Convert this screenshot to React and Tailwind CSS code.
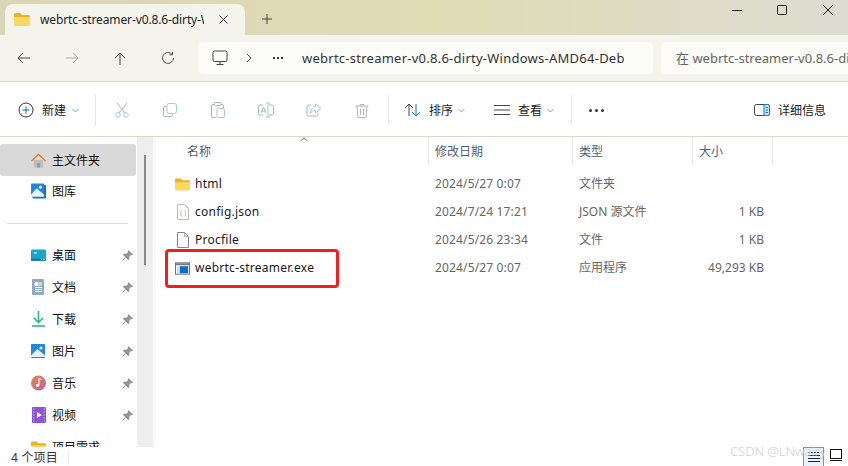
import React from "react";

const Stroke = ({ w = 16, h = 16, c = "#444", sw = 1, children, vb }) => (
  <svg width={w} height={h} viewBox={vb || `0 0 ${w} ${h}`} fill="none" stroke={c} strokeWidth={sw}>{children}</svg>
);

const Folder = ({ w = 16, h = 13 }) => (
  <svg width={w} height={h} viewBox="0 0 16 13">
    <path d="M0 1.5A1.5 1.5 0 0 1 1.5 0H6l2 2h6.5A1.5 1.5 0 0 1 16 3.5V5H0z" fill="#f0b020" />
    <path d="M0 4h16v7.5a1.5 1.5 0 0 1-1.500 1.500h-13A1.500 1.500 0 0 1 0 11.500z" fill="#fbd764" />
  </svg>
);

const Chevron = () => (
  <svg width="7" height="5" viewBox="0 0 7 5" fill="none" stroke="#999" strokeWidth="1"><path d="M.5 1 3.500 4 6.500 1" /></svg>
);

const Sep = () => <div className="w-px h-[32px] bg-[#e6e6e6]" />;

const Cell = ({ w, children }) => <div className={`flex justify-center items-center ${w}`}>{children}</div>;

function NavBar() {
  return (
    <div className="h-[47px] bg-[#f4f4ec] flex items-center border-b border-[#d9d9c9]">
      <div className="w-[198px] flex items-center shrink-0">
        <Cell w="w-[48px]"><Stroke w={14} h={12} c="#444"><path d="M13 6H1M6 1 1 6l5 5" /></Stroke></Cell>
        <Cell w="w-[48px]"><Stroke w={14} h={12} c="#aaa"><path d="M1 6h12M8 1l5 5-5 5" /></Stroke></Cell>
        <Cell w="w-[48px]"><Stroke w={12} h={13} c="#444"><path d="M6 13V1M1 6l5-5 5 5" /></Stroke></Cell>
        <Cell w="w-[48px]"><Stroke w={14} h={14} c="#555"><path d="M11 3.200A5.500 5.500 0 1 0 12.500 7" /><path d="M11.500.8v3h-3" /></Stroke></Cell>
      </div>
      <div className="w-[455px] h-[32px] bg-[#fbfbf8] rounded-[5px] flex items-center shrink-0">
        <div className="w-[14px]" />
        <Stroke w={16} h={16} c="#444"><rect x="1" y="1" width="14" height="10.500" rx="1.500" /><path d="M8 11.500v2.500M4.500 14.500h7" /></Stroke>
        <div className="w-[18px]" />
        <Stroke w={6} h={10} c="#444"><path d="m1 1 4 4-4 4" /></Stroke>
        <div className="w-[21px]" />
        <div className="flex gap-[2px] w-[13px]">
          <span className="w-[2px] h-[2px] bg-[#333]" />
          <span className="w-[2px] h-[2px] bg-[#333]" />
          <span className="w-[2px] h-[2px] bg-[#333]" />
        </div>
        <div className="w-[16px]" />
        <div className="w-[322px] overflow-hidden whitespace-nowrap text-[#333] text-[13px] tracking-[0.25px] pt-[2px]">webrtc-streamer-v0.8.6-dirty-Windows-AMD64-Debug</div>
      </div>
      <div className="w-[8px] shrink-0" />
      <div className="flex-1 h-[32px] bg-[#fbfbf8] rounded-l-[5px] flex items-center pl-[15px] pt-[2px] overflow-hidden whitespace-nowrap text-[13px] text-[#666]">在 webrtc-streamer-v0.8.6-dirty-Windows</div>
    </div>
  );
}

function CommandBar() {
  const dim = "#a9b4bd";
  const blue = "#9cc9ec";
  return (
    <div className="h-[55px] bg-white flex items-center pt-[2px] text-[12px] text-[#222] border-b border-[#d9d9c9]">
      <div className="w-[95px] flex items-center shrink-0">
        <div className="w-[18px]" />
        <Stroke w={16} h={16} c="#333"><circle cx="8" cy="8" r="7" /><path d="M8 4.500v7M4.500 8h7" stroke="#0a6cc4" /></Stroke>
        <div className="w-[8px]" />
        <span className="w-[25px] pt-[1px]">新建</span>
        <div className="w-[5px]" />
        <Chevron />
      </div>
      <Sep />
      <div className="flex shrink-0 w-[292px] pl-[2px]">
        <Cell w="w-[48px]"><Stroke w={14} h={16} c={dim}><path d="M2 1l8 10M12 1 4 11" /><circle cx="3" cy="13" r="2.300" stroke={blue} /><circle cx="11" cy="13" r="2.300" stroke={blue} /></Stroke></Cell>
        <Cell w="w-[48px]"><Stroke w={14} h={14} c={dim}><path d="M3 3.500H2A1.500 1.500 0 0 0 .5 5v7A1.500 1.500 0 0 0 2 13.500h6A1.500 1.500 0 0 0 9.500 12v-.5" /><rect x="4" y=".5" width="9.500" height="10" rx="2" stroke={blue} /></Stroke></Cell>
        <Cell w="w-[48px]"><Stroke w={14} h={16} c={dim}><path d="M3.500 2.500H2A1.500 1.500 0 0 0 .5 4v10A1.500 1.500 0 0 0 2 15.500h3M10 2.500h1A1.500 1.500 0 0 1 12.500 4v2" /><rect x="3.500" y=".5" width="6.500" height="3" rx="1" /><rect x="6" y="6.500" width="7.500" height="9" rx="1.500" stroke={blue} /></Stroke></Cell>
        <Cell w="w-[48px]"><Stroke w={16} h={16} c={dim}><path d="M5 3H2A1.500 1.500 0 0 0 .5 4.500v7A1.500 1.500 0 0 0 2 13h3M11 3h3a1.500 1.500 0 0 1 1.500 1.500v7A1.500 1.500 0 0 1 14 13h-3" /><path d="M10 1v14M8 1h4M8 15h4" stroke={blue} /><path d="m3 11 2.500-6L8 11M3.800 9h3.500" /></Stroke></Cell>
        <Cell w="w-[48px]"><Stroke w={16} h={14} c={dim}><path d="M5 2H2.500A1.500 1.500 0 0 0 1 3.500v8A1.500 1.500 0 0 0 2.500 13h8a1.500 1.500 0 0 0 1.500-1.500V10" /><path d="M9.500 1 15 5.500 9.500 10V7.500C7 7.500 5.500 8.500 4.500 10.500 4.500 6.500 6.500 4 9.500 3.500z" stroke={blue} /></Stroke></Cell>
        <Cell w="w-[48px]"><Stroke w={14} h={15} c={dim}><path d="M.5 3h13M5 3V1.500h4V3M2 3l.8 10.500a1 1 0 0 0 1 1h6.400a1 1 0 0 0 1-1L12 3M5.500 6v6M8.500 6v6" /></Stroke></Cell>
      </div>
      <Sep />
      <div className="w-[182px] flex items-center shrink-0">
        <div className="w-[15px]" />
        <Stroke w={17} h={14} c="#444"><path d="M5 13V1M1 5l4-4 4 4" /><path d="M12 1v12M8 9l4 4 4-4" stroke="#0a78d4" /></Stroke>
        <div className="w-[8px]" />
        <span className="w-[24px] pt-[1px]">排序</span>
        <div className="w-[5px]" />
        <Chevron />
        <div className="w-[29px]" />
        <Stroke w={16} h={10} c="#444"><path d="M0 .5h16M0 5h16M0 9.500h16" /></Stroke>
        <div className="w-[8px]" />
        <span className="w-[24px] pt-[1px]">查看</span>
        <div className="w-[5px]" />
        <Chevron />
      </div>
      <Sep />
      <div className="w-[182px] pl-[17px] flex gap-[3px] shrink-0">
        <span className="w-[3px] h-[3px] rounded-full bg-[#333]" />
        <span className="w-[3px] h-[3px] rounded-full bg-[#333]" />
        <span className="w-[3px] h-[3px] rounded-full bg-[#333]" />
      </div>
      <svg width="16" height="12" viewBox="0 0 16 12" fill="none"><rect x=".5" y=".5" width="15" height="11" rx="2" stroke="#444" /><path d="M10 .5h3.500a2 2 0 0 1 2 2v7a2 2 0 0 1-2 2H10z" fill="#cfe6f8" stroke="#0a78d4" /><path d="M11.500 3.500h2.500M11.500 6h2.500M11.500 8.500h2.500" stroke="#0a78d4" /></svg>
      <div className="w-[8px]" />
      <span className="pt-[1px]">详细信息</span>
    </div>
  );
}

const Home = () => (
  <svg width="16" height="15" viewBox="0 0 16 15">
    <path d="M3 7h10v7a1 1 0 0 1-1 1H4a1 1 0 0 1-1-1z" fill="#bdbdbd" />
    <path d="M6.500 10h3v5h-3z" fill="#999" />
    <path d="M8 0 16 7.500 15 8.500 8 2 1 8.500 0 7.500z" fill="#e0791b" />
  </svg>
);
const Gallery = () => (
  <svg width="16" height="16" viewBox="0 0 16 16">
    <rect x="1.500" y="1.500" width="14.500" height="14.500" rx="1" fill="#1f6db5" />
    <rect width="14" height="14" rx="1" fill="#1d8ae0" />
    <circle cx="10" cy="4" r="1.500" fill="#fff" />
    <path d="M0 14 V12 L6 5 14 12 v2z" fill="#e8f3fb" />
  </svg>
);
const Desktop = () => (
  <svg width="16" height="12" viewBox="0 0 16 12">
    <rect width="16" height="12" rx="1" fill="#17a6c8" />
    <rect x="0" y="10" width="16" height="2" fill="#0c6f97" />
    <rect x="3" y="3" width="3" height="1.500" fill="#c5f0f5" />
    <path d="M11 10.500h1M13 10.500h2" stroke="#fff" strokeWidth="1" />
  </svg>
);
const Docs = () => (
  <svg width="13" height="16" viewBox="0 0 13 16">
    <rect width="12" height="16" rx="1" fill="#8fa8c4" />
    <path d="M3 3.500h3v3H3z M7 4h3M7 6h3M3 8.500h7M3 10.500h7M3 12.500h7" stroke="#fff" strokeWidth="1" fill="#fff" />
  </svg>
);
const Download = () => (
  <svg width="13" height="16" viewBox="0 0 13 16" fill="none" stroke="#22ae90" strokeWidth="1.500">
    <path d="M6.500 0v11M2 7l4.500 4.500L11 7M0 15h13" />
  </svg>
);
const Pics = () => (
  <svg width="15" height="14" viewBox="0 0 15 14">
    <rect width="14" height="14" rx="1" fill="#1d8ae0" />
    <circle cx="10" cy="4" r="1.500" fill="#fff" />
    <path d="M0 13 V11.500 L6.500 5 14 11.500 V13z" fill="#e8f3fb" />
  </svg>
);
const Music = () => (
  <svg width="16" height="16" viewBox="0 0 16 16">
    <defs><linearGradient id="mg" x1="0" y1="0" x2="1" y2="1"><stop offset="0" stopColor="#e58a48" /><stop offset="1" stopColor="#bf5f9c" /></linearGradient></defs>
    <circle cx="8" cy="8" r="8" fill="url(#mg)" />
    <path d="M8.500 3v7" stroke="#fff" strokeWidth="1.200" />
    <path d="M8.500 3 11 4.500" stroke="#fff" strokeWidth="1.200" />
    <circle cx="7" cy="10.500" r="1.700" fill="#fff" />
  </svg>
);
const Video = () => (
  <svg width="14" height="16" viewBox="0 0 14 16">
    <rect width="14" height="16" rx="1" fill="#8c52d8" />
    <path d="M5 5v6l5-3z" fill="#fff" />
    <path d="M1 2h1.500M1 5h1.500M1 8h1.500M1 11h1.500M1 14h1.500M11.500 2H13M11.500 5H13M11.500 8H13M11.500 11H13M11.500 14H13" stroke="#c9b0f0" strokeWidth="1" />
  </svg>
);
const Pin = () => (
  <svg width="11" height="11" viewBox="0 0 11 11"><path d="M6.500 0 11 4.500 9.800 5.300 8.800 5 7.200 7.200 7.500 9 6.300 10 3.800 7.500 .8 10.800 0 10.300 3.300 7 .9 4.700 1.900 3.500 3.800 3.900 6 2.200 5.700 1z" fill="#8f979e" /></svg>
);

const SideRow = ({ icon, label, pin, active }) => (
  <div className={`h-[32px] shrink-0 flex items-center rounded-[3px] ${active ? "bg-[#d9d9d9] -mb-px" : ""}`}>
    <div className="w-[46px] mr-[6px] pl-[31px] flex justify-center items-center shrink-0">{icon}</div>
    <span className="flex-1 pt-[1px] text-[12px] text-[#111]">{label}</span>
    {pin && <div className="mr-[3px]"><Pin /></div>}
  </div>
);

function Sidebar() {
  return (
    <div className="w-[137px] shrink-0 pt-[7px] pr-[1px] flex flex-col overflow-hidden">
      <SideRow active icon={<Home />} label="主文件夹" />
      <SideRow icon={<Gallery />} label="图库" />
      <div className="h-[32px] shrink-0 flex items-center pl-[7px] pr-[8px]"><div className="h-px w-full bg-[#dcdcdc]" /></div>
      <SideRow pin icon={<Desktop />} label="桌面" />
      <SideRow pin icon={<Docs />} label="文档" />
      <SideRow pin icon={<Download />} label="下载" />
      <SideRow pin icon={<Pics />} label="图片" />
      <SideRow pin icon={<Music />} label="音乐" />
      <SideRow pin icon={<Video />} label="视频" />
      <SideRow icon={<Folder />} label="项目需求" />
    </div>
  );
}

const JsonIcon = () => (
  <svg width="12" height="16" viewBox="0 0 12 16" fill="none">
    <path d="M.5.5h7l4 4v11H.5z" fill="#fff" stroke="#bbb" />
    <path d="M5 6.500C4 6.500 4 7.500 4 8.500S3.500 9.500 3.500 9.500 4 9.500 4 10.500 4 12 5 12M7.500 6.500c1 0 1 1 1 2s.5 1 .5 1-.5 0-.5 1S8.500 12 7.500 12" stroke="#c8c060" />
  </svg>
);
const FileIcon = () => (
  <svg width="12" height="16" viewBox="0 0 12 16" fill="none"><path d="M.5.5h7l4 4v11H.5z" fill="#fff" stroke="#888" /><path d="M7.500.5v4h4" stroke="#aaa" /></svg>
);
const ExeIcon = () => (
  <svg width="16" height="13" viewBox="0 0 16 13">
    <rect x=".5" y=".5" width="15" height="12" fill="#fff" stroke="#666" />
    <rect x="1" y="1" width="14" height="2" fill="#777" />
    <rect x="5" y="4" width="9" height="7.500" fill="#0f6fc6" />
    <rect x="2" y="4.500" width="2" height="6.500" fill="#cdd" />
  </svg>
);

const cols = "grid grid-cols-[274px_144px_120px_80px]";

const Row = ({ icon, name, date, type, size }) => (
  <div className={`${cols} h-[28px] items-center text-[12px]`}>
    <div className="flex items-center pl-[20px]">
      <div className="w-[15px] flex justify-center shrink-0">{icon}</div>
      <span className="ml-[5px] text-[#1a1a1a] tracking-[0.25px]">{name}</span>
    </div>
    <span className="pl-[6px] text-[#666] tracking-[0.15px]">{date}</span>
    <span className="pl-[6px] text-[#666]">{type}</span>
    <span className="pr-[9px] text-right text-[#666]">{size}</span>
  </div>
);

function Content() {
  return (
    <div className="relative flex-1 flex flex-col min-w-0">
      <div className={`${cols} relative h-[28px] items-center text-[12px] text-[#4c607a] shrink-0`}>
        <div className="h-full border-r border-[#e5e5e5] pl-[32px] pt-[2px] flex items-center">名称</div>
        <div className="h-full border-r border-[#e5e5e5] pl-[6px] pt-[2px] flex items-center">修改日期</div>
        <div className="h-full border-r border-[#e5e5e5] pl-[6px] pt-[2px] flex items-center">类型</div>
        <div className="h-full border-r border-[#e5e5e5] pl-[6px] pt-[2px] flex items-center">大小</div>
        <svg className="absolute left-[145px] top-[0px]" width="8" height="5" viewBox="0 0 8 5" fill="none" stroke="#666"><path d="M.5 4 4 .8 7.500 4" /></svg>
      </div>
      <div className="pt-[5px]">
        <Row icon={<Folder />} name="html" date="2024/5/27 0:07" type="文件夹" size="" />
        <Row icon={<JsonIcon />} name="config.json" date="2024/7/24 17:21" type="JSON 源文件" size="1 KB" />
        <Row icon={<FileIcon />} name="Procfile" date="2024/5/26 23:34" type="文件" size="1 KB" />
        <Row icon={<ExeIcon />} name="webrtc-streamer.exe" date="2024/5/27 0:07" type="应用程序" size="49,293 KB" />
      </div>
      <div className="absolute left-[10px] top-[112px] w-[174px] h-[39px] border-[3px] border-[#f0201e] rounded-[4px]" />
    </div>
  );
}

export default function App() {
  return (
    <div className="w-[848px] h-[466px] overflow-hidden flex flex-col bg-white font-['Noto_Sans','Noto_Sans_CJK_SC',sans-serif]">
      <div className="h-[35px] shrink-0 bg-gradient-to-r from-[#d8d6b4] via-[#e0dcb4] to-[#dedcd2] flex items-end border-b border-[#d9d9c9]">
        <div className="ml-[5px] w-[240px] h-[31px] bg-[#f4f4ec] rounded-t-[8px] flex items-center pl-[9px] -mb-px">
          <Folder />
          <div className="ml-[10px] w-[164px] overflow-hidden whitespace-nowrap text-[12px] tracking-[-0.12px] text-[#222]">webrtc-streamer-v0.8.6-dirty-Windows</div>
          <div className="ml-[15px]"><Stroke w={9} h={9} c="#333"><path d="m.5.5 8 8M8.500.5l-8 8" /></Stroke></div>
        </div>
        <div className="ml-[17px] h-[31px] flex items-center"><Stroke w={10} h={10} c="#444"><path d="M5 0v10M0 5h10" /></Stroke></div>
        <div className="flex-1" />
        <div className="h-full flex items-start pt-[5px] pr-[15px]">
          <div className="mt-[5px] w-[10px] h-px bg-[#222]" />
          <div className="ml-[35px] w-[10px] h-[10px] border border-[#222] rounded-[1px]" />
          <div className="ml-[36px]"><Stroke w={10} h={10} c="#222"><path d="m0 0 10 10M10 0 0 10" /></Stroke></div>
        </div>
      </div>
      <NavBar />
      <CommandBar />
      <div className="flex-1 flex min-h-0">
        <Sidebar />
        <div className="w-[16px] shrink-0 bg-[#eeeeee] relative">
          <div className="absolute left-[7px] top-[18px] w-[2px] h-[110px] bg-[#8a8a8a]" />
        </div>
        <div className="w-[2px] shrink-0 border-r border-[#f4f4f4]" />
        <Content />
      </div>
      <div className="relative h-[19px] shrink-0 bg-white flex items-center pl-[11px] pt-[2px] text-[12px] text-[#333]">
        <span className="w-[57px] whitespace-pre tracking-[0.2px]">4 个项目</span>
        <div className="h-[14px] w-px bg-[#eee]" />
        <div className="absolute left-[803px] top-0 w-[21px] h-[19px] bg-[#eaf3f8] border-x border-t border-[#46a5d8] flex items-center justify-center">
          <Stroke w={12} h={10} c="#222"><path d="M0 .5h12" strokeDasharray="2 1" /><path d="M0 3.500h12M0 6.500h12M0 9.500h12" /></Stroke>
        </div>
        <div className="absolute left-[830px] top-[2px]"><Stroke w={12} h={12} c="#111"><rect x=".5" y=".5" width="11" height="9" /><path d="M0 11.500h12" /></Stroke></div>
        <span className="absolute left-[730px] -top-[5px] text-[13px] text-[#cfcfcf] whitespace-nowrap font-light">CSDN @LNwairy</span>
      </div>
    </div>
  );
}
